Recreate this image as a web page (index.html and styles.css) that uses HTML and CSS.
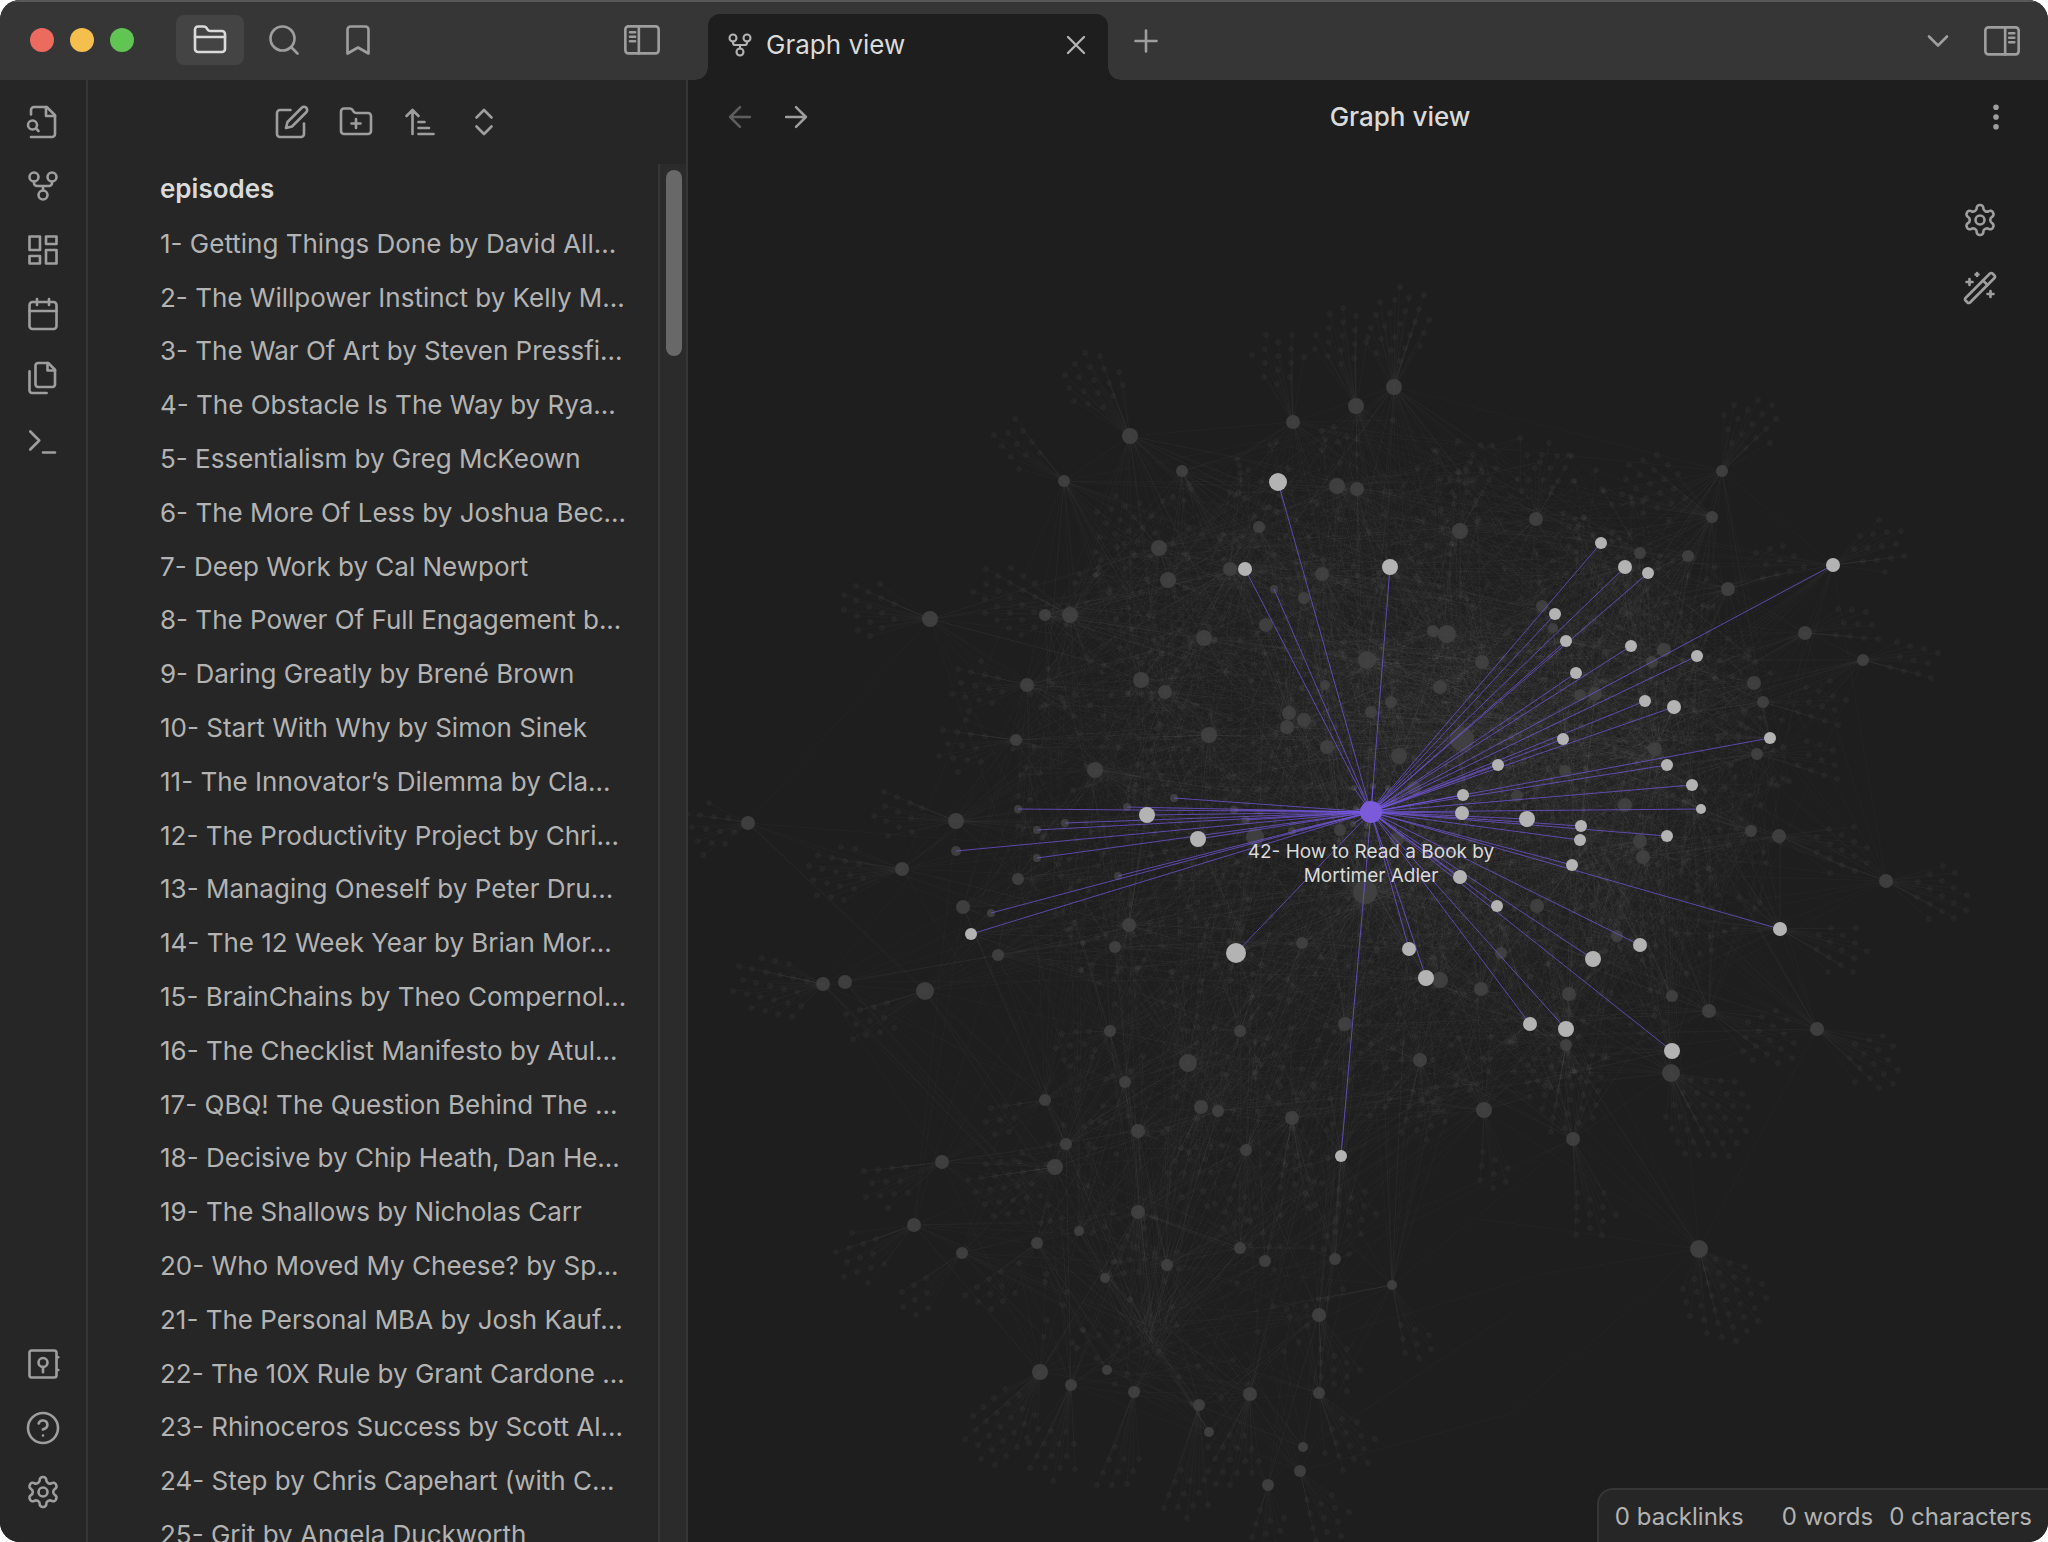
FILE: index.html
```html
<!DOCTYPE html>
<html lang="en">
<head>
<meta charset="utf-8">
<meta name="viewport" content="width=device-width, initial-scale=1">
<title>Graph view</title>
<link rel="stylesheet" href="styles.css">
</head>
<body>
<svg class="sprite" aria-hidden="true">
  <symbol id="i-folder" viewBox="0 0 24 24"><path d="M4 20h16a2 2 0 0 0 2-2V8a2 2 0 0 0-2-2h-7.93a2 2 0 0 1-1.66-.9l-.82-1.2A2 2 0 0 0 7.93 3H4a2 2 0 0 0-2 2v13c0 1.1.9 2 2 2Z"/><path d="M2 10h20"/></symbol>
  <symbol id="i-search" viewBox="0 0 24 24"><circle cx="11" cy="11" r="8"/><path d="m21 21-4.3-4.3"/></symbol>
  <symbol id="i-bookmark" viewBox="0 0 24 24"><path d="m19 21-7-4-7 4V5a2 2 0 0 1 2-2h10a2 2 0 0 1 2 2v16z"/></symbol>
  <symbol id="i-left" viewBox="0 0 24 24"><rect x="0.9" y="2.9" width="22.2" height="18" rx="2"/><path d="M9.9 3v18M4 6.8h3.4M4 9.8h3.4M4 12.8h3.4"/></symbol>
  <symbol id="i-right" viewBox="0 0 24 24"><rect x="0.9" y="2.9" width="22.2" height="18" rx="2"/><path d="M14.1 3v18M16.8 6.8h3.4M16.8 9.8h3.4M16.8 12.8h3.4"/></symbol>
  <symbol id="i-fork" viewBox="0 0 24 24"><circle cx="12" cy="18" r="3"/><circle cx="6" cy="6" r="3"/><circle cx="18" cy="6" r="3"/><path d="M18 9v1a2 2 0 0 1-2 2H8a2 2 0 0 1-2-2V9M12 12v3"/></symbol>
  <symbol id="i-close" viewBox="0 0 24 24"><path d="M18 6 6 18M6 6l12 12"/></symbol>
  <symbol id="i-plus" viewBox="0 0 24 24"><path d="M5 12h14M12 5v14"/></symbol>
  <symbol id="i-down" viewBox="0 0 24 24"><path d="m6 9 6 6 6-6"/></symbol>
  <symbol id="i-back" viewBox="0 0 24 24"><path d="m12 19-7-7 7-7M19 12H5"/></symbol>
  <symbol id="i-forward" viewBox="0 0 24 24"><path d="M5 12h14M12 5l7 7-7 7"/></symbol>
  <symbol id="i-more" viewBox="0 0 24 24"><circle cx="12" cy="12" r="1"/><circle cx="12" cy="5.5" r="1"/><circle cx="12" cy="18.5" r="1"/></symbol>
  <symbol id="i-file-search" viewBox="0 0 24 24"><path d="M4 22h14a2 2 0 0 0 2-2V7.5L14.5 2H6a2 2 0 0 0-2 2v3"/><path d="M14 2v6h6"/><circle cx="5" cy="14" r="3"/><path d="m9 18-1.5-1.5"/></symbol>
  <symbol id="i-dashboard" viewBox="0 0 24 24"><rect x="3" y="3" width="7" height="9"/><rect x="14" y="3" width="7" height="5"/><rect x="14" y="12" width="7" height="9"/><rect x="3" y="16" width="7" height="5"/></symbol>
  <symbol id="i-calendar" viewBox="0 0 24 24"><rect x="3" y="4" width="18" height="18" rx="2"/><path d="M16 2v4M8 2v4M3 10h18"/></symbol>
  <symbol id="i-files" viewBox="0 0 24 24"><path d="M15.5 2H8.6c-.4 0-.8.2-1.1.5-.3.3-.5.7-.5 1.1v12.8c0 .4.2.8.5 1.1.3.3.7.5 1.1.5h9.8c.4 0 .8-.2 1.1-.5.3-.3.5-.7.5-1.1V6.5L15.5 2z"/><path d="M3 7.6v12.8c0 .4.2.8.5 1.1.3.3.7.5 1.1.5h9.8"/><path d="M15 2v5h5"/></symbol>
  <symbol id="i-terminal" viewBox="0 0 24 24"><path d="m3.5 17 6-6-6-6M12 19h8"/></symbol>
  <symbol id="i-vault" viewBox="0 0 24 24"><rect x="3" y="3" width="18" height="18" rx="1.5"/><circle cx="12" cy="11" r="3"/><path d="M12 14v3.5M21.5 7.5h.7M21.5 16h.7"/></symbol>
  <symbol id="i-help" viewBox="0 0 24 24"><circle cx="12" cy="12" r="10"/><path d="M9.09 9a3 3 0 0 1 5.83 1c0 2-3 3-3 3M12 17h.01"/></symbol>
  <symbol id="i-gear" viewBox="0 0 24 24"><path d="M12.22 2h-.44a2 2 0 0 0-2 2v.18a2 2 0 0 1-1 1.73l-.43.25a2 2 0 0 1-2 0l-.15-.08a2 2 0 0 0-2.73.73l-.22.38a2 2 0 0 0 .73 2.73l.15.1a2 2 0 0 1 1 1.72v.51a2 2 0 0 1-1 1.74l-.15.09a2 2 0 0 0-.73 2.73l.22.38a2 2 0 0 0 2.73.73l.15-.08a2 2 0 0 1 2 0l.43.25a2 2 0 0 1 1 1.73V20a2 2 0 0 0 2 2h.44a2 2 0 0 0 2-2v-.18a2 2 0 0 1 1-1.73l.43-.25a2 2 0 0 1 2 0l.15.08a2 2 0 0 0 2.73-.73l.22-.39a2 2 0 0 0-.73-2.73l-.15-.08a2 2 0 0 1-1-1.74v-.5a2 2 0 0 1 1-1.74l.15-.09a2 2 0 0 0 .73-2.73l-.22-.38a2 2 0 0 0-2.73-.73l-.15.08a2 2 0 0 1-2 0l-.43-.25a2 2 0 0 1-1-1.73V4a2 2 0 0 0-2-2z"/><circle cx="12" cy="12" r="3"/></symbol>
  <symbol id="i-wand" viewBox="0 0 24 24"><path d="m21.64 3.64-1.28-1.28a1.21 1.21 0 0 0-1.72 0L2.36 18.64a1.21 1.21 0 0 0 0 1.72l1.28 1.28a1.2 1.2 0 0 0 1.72 0L21.64 5.36a1.2 1.2 0 0 0 0-1.72Z"/><path d="m14 7 3 3M5 6v4M19 14v4M10 2v2M7 8H3M21 16h-4M11 3H9"/></symbol>
  <symbol id="i-edit" viewBox="0 0 24 24"><path d="M11 4H4a2 2 0 0 0-2 2v14a2 2 0 0 0 2 2h14a2 2 0 0 0 2-2v-7"/><path d="M18.5 2.5a2.12 2.12 0 0 1 3 3L12 15l-4 1 1-4Z"/></symbol>
  <symbol id="i-folder-plus" viewBox="0 0 24 24"><path d="M4 20h16a2 2 0 0 0 2-2V8a2 2 0 0 0-2-2h-7.93a2 2 0 0 1-1.66-.9l-.82-1.2A2 2 0 0 0 7.93 3H4a2 2 0 0 0-2 2v13c0 1.1.9 2 2 2Z"/><path d="M12 10v6M9 13h6"/></symbol>
  <symbol id="i-sort" viewBox="0 0 24 24"><path d="m3 8 4-4 4 4M7 4v16M11 12h4M11 16h7M11 20h10"/></symbol>
  <symbol id="i-updown" viewBox="0 0 24 24"><path d="m7 15 5 5 5-5M7 9l5-5 5 5"/></symbol>
</svg>

<div class="app">
  <header class="titlebar">
    <div class="titlebar-left">
      <div class="lights"><span class="light light-close"></span><span class="light light-min"></span><span class="light light-max"></span></div>
      <div class="side-tabs">
        <button class="side-tab active" aria-label="Files"><svg class="icon"><use href="#i-folder"/></svg></button>
        <button class="side-tab" aria-label="Search"><svg class="icon"><use href="#i-search"/></svg></button>
        <button class="side-tab" aria-label="Bookmarks"><svg class="icon"><use href="#i-bookmark"/></svg></button>
      </div>
      <button class="icon-btn" aria-label="Collapse left sidebar"><svg class="icon"><use href="#i-left"/></svg></button>
    </div>
    <div class="titlebar-main">
      <div class="tab">
        <svg class="icon icon-tab"><use href="#i-fork"/></svg>
        <span class="tab-title">Graph view</span>
        <button class="tab-close" aria-label="Close tab"><svg class="icon icon-small"><use href="#i-close"/></svg></button>
      </div>
      <button class="icon-btn new-tab" aria-label="New tab"><svg class="icon"><use href="#i-plus"/></svg></button>
      <button class="icon-btn" aria-label="Tab list"><svg class="icon"><use href="#i-down"/></svg></button>
      <button class="icon-btn" aria-label="Expand right sidebar"><svg class="icon"><use href="#i-right"/></svg></button>
    </div>
  </header>

  <div class="workspace">
    <nav class="ribbon" aria-label="Ribbon">
      <button class="ribbon-btn" aria-label="Quick switcher"><svg class="icon"><use href="#i-file-search"/></svg></button>
      <button class="ribbon-btn" aria-label="Graph view"><svg class="icon"><use href="#i-fork"/></svg></button>
      <button class="ribbon-btn" aria-label="Canvas"><svg class="icon"><use href="#i-dashboard"/></svg></button>
      <button class="ribbon-btn" aria-label="Daily note"><svg class="icon"><use href="#i-calendar"/></svg></button>
      <button class="ribbon-btn" aria-label="Templates"><svg class="icon"><use href="#i-files"/></svg></button>
      <button class="ribbon-btn" aria-label="Command palette"><svg class="icon"><use href="#i-terminal"/></svg></button>
      <span class="spacer"></span>
      <button class="ribbon-btn" aria-label="Open another vault"><svg class="icon"><use href="#i-vault"/></svg></button>
      <button class="ribbon-btn" aria-label="Help"><svg class="icon"><use href="#i-help"/></svg></button>
      <button class="ribbon-btn" aria-label="Settings"><svg class="icon"><use href="#i-gear"/></svg></button>
    </nav>

    <aside class="sidebar">
      <div class="actions">
        <button class="action" aria-label="New note"><svg class="icon"><use href="#i-edit"/></svg></button>
        <button class="action" aria-label="New folder"><svg class="icon"><use href="#i-folder-plus"/></svg></button>
        <button class="action" aria-label="Sort order"><svg class="icon"><use href="#i-sort"/></svg></button>
        <button class="action" aria-label="Expand all"><svg class="icon"><use href="#i-updown"/></svg></button>
      </div>
      <div class="explorer">
        <div class="files">
          <h2 class="folder">episodes</h2>
          <ul class="file-list">
            <li><a class="file" href="#">1- Getting Things Done by David All...</a></li>
            <li><a class="file" href="#">2- The Willpower Instinct by Kelly M...</a></li>
            <li><a class="file" href="#">3- The War Of Art by Steven Pressfi...</a></li>
            <li><a class="file" href="#">4- The Obstacle Is The Way by Rya...</a></li>
            <li><a class="file" href="#">5- Essentialism by Greg McKeown</a></li>
            <li><a class="file" href="#">6- The More Of Less by Joshua Bec...</a></li>
            <li><a class="file" href="#">7- Deep Work by Cal Newport</a></li>
            <li><a class="file" href="#">8- The Power Of Full Engagement b...</a></li>
            <li><a class="file" href="#">9- Daring Greatly by Brené Brown</a></li>
            <li><a class="file" href="#">10- Start With Why by Simon Sinek</a></li>
            <li><a class="file" href="#">11- The Innovator’s Dilemma by Cla...</a></li>
            <li><a class="file" href="#">12- The Productivity Project by Chri...</a></li>
            <li><a class="file" href="#">13- Managing Oneself by Peter Dru...</a></li>
            <li><a class="file" href="#">14- The 12 Week Year by Brian Mor...</a></li>
            <li><a class="file" href="#">15- BrainChains by Theo Compernol...</a></li>
            <li><a class="file" href="#">16- The Checklist Manifesto by Atul...</a></li>
            <li><a class="file" href="#">17- QBQ! The Question Behind The ...</a></li>
            <li><a class="file" href="#">18- Decisive by Chip Heath, Dan He...</a></li>
            <li><a class="file" href="#">19- The Shallows by Nicholas Carr</a></li>
            <li><a class="file" href="#">20- Who Moved My Cheese? by Sp...</a></li>
            <li><a class="file" href="#">21- The Personal MBA by Josh Kauf...</a></li>
            <li><a class="file" href="#">22- The 10X Rule by Grant Cardone ...</a></li>
            <li><a class="file" href="#">23- Rhinoceros Success by Scott Al...</a></li>
            <li><a class="file" href="#">24- Step by Chris Capehart (with C...</a></li>
            <li><a class="file" href="#">25- Grit by Angela Duckworth</a></li>
          </ul>
        </div>
        <div class="scroll-track"><div class="scroll-thumb"></div></div>
      </div>
    </aside>

    <main class="pane">
      <div class="view-header">
        <button class="nav-btn muted" aria-label="Back"><svg class="icon icon-nav"><use href="#i-back"/></svg></button>
        <button class="nav-btn" aria-label="Forward"><svg class="icon icon-nav"><use href="#i-forward"/></svg></button>
        <h1 class="view-title">Graph view</h1>
        <button class="nav-btn" aria-label="More options"><svg class="icon icon-more"><use href="#i-more"/></svg></button>
      </div>
      <div class="graph">
        <svg class="graph-canvas" id="graph" viewBox="688 154 1360 1388" preserveAspectRatio="xMidYMid meet" role="img" aria-label="Note graph">
          <g id="links"></g><g id="leaves"></g><g id="nodes"></g><g id="active"></g>
          <text class="node-label" text-anchor="middle"><tspan x="1371" y="858">42- How to Read a Book by</tspan><tspan x="1371" y="882">Mortimer Adler</tspan></text>
        </svg>
        <div class="graph-controls">
          <button class="control" aria-label="Graph settings"><svg class="icon"><use href="#i-gear"/></svg></button>
          <button class="control" aria-label="Animate"><svg class="icon"><use href="#i-wand"/></svg></button>
        </div>
      </div>
      <footer class="status">
        <span class="status-item backlinks">0 backlinks</span>
        <span class="status-item">0 words</span>
        <span class="status-item">0 characters</span>
      </footer>
    </main>
  </div>
</div>
<script src="graph.js"></script>
</body>
</html>
```
FILE: styles.css
```css
:root {
  --bg: #1e1e1e;
  --bg-side: #262626;
  --bg-title: #363636;
  --line: #363636;
  --text: #dadada;
  --text-muted: #b3b3b3;
  --icon: #9e9e9e;
}

* { box-sizing: border-box; }

body {
  margin: 0;
  background: #fff;
  color: var(--text-muted);
  font-family: Inter, "Liberation Sans", sans-serif;
  font-size: 26px;
  line-height: 1.3;
}

button {
  display: flex;
  align-items: center;
  justify-content: center;
  padding: 0;
  border: 0;
  background: none;
  color: var(--icon);
  font: inherit;
}

.sprite { display: none; }

.icon {
  width: 36px;
  height: 36px;
  fill: none;
  stroke: currentColor;
  stroke-width: 1.75;
  stroke-linecap: round;
  stroke-linejoin: round;
}
.icon-small { width: 32px; height: 32px; }
.icon-nav { width: 34px; height: 34px; }
.icon-tab { width: 28px; height: 28px; }
.icon-more { fill: currentColor; }

.app {
  display: flex;
  flex-direction: column;
  height: 100vh;
  overflow: hidden;
  border-radius: 20px;
  background: var(--bg);
}

/* Title bar */
.titlebar {
  display: flex;
  flex: none;
  height: 80px;
  background: var(--bg-title);
  box-shadow: inset 0 2px #585858;
}
.titlebar-left {
  display: flex;
  align-items: center;
  flex: none;
  width: 688px;
  padding: 0 20px 0 30px;
}
.lights { display: flex; gap: 16px; }
.light { width: 24px; height: 24px; border-radius: 50%; }
.light-close { background: #ec6a5e; }
.light-min { background: #f4bf4f; }
.light-max { background: #61c554; }
.side-tabs { display: flex; flex: 1; gap: 6px; margin-left: 42px; }
.side-tab { width: 68px; height: 50px; border-radius: 8px; }
.side-tab.active { background: #444; color: var(--text); }
.icon-btn { width: 52px; height: 52px; }

.titlebar-main {
  display: flex;
  align-items: center;
  flex: 1;
  gap: 12px;
  padding: 2px 20px 0;
}
.tab {
  position: relative;
  display: flex;
  align-items: center;
  align-self: flex-end;
  gap: 12px;
  width: 400px;
  height: 66px;
  padding: 0 16px 4px 18px;
  border-radius: 12px 12px 0 0;
  background: var(--bg);
  color: var(--text-muted);
}
.tab::before,
.tab::after {
  content: "";
  position: absolute;
  bottom: 0;
  width: 12px;
  height: 12px;
}
.tab::before { right: 100%; background: radial-gradient(circle at 0 0, transparent 11px, var(--bg) 12px); }
.tab::after { left: 100%; background: radial-gradient(circle at 100% 0, transparent 11px, var(--bg) 12px); }
.tab-title { flex: 1; color: var(--text); }
.tab-close { color: var(--text-muted); }
.new-tab { margin-right: auto; }

/* Ribbon */
.workspace { display: flex; flex: 1; min-height: 0; }
.ribbon {
  display: flex;
  flex: none;
  flex-direction: column;
  width: 88px;
  padding: 10px 0 18px;
  border-right: 2px solid var(--line);
  background: var(--bg-side);
}
.ribbon-btn { height: 64px; }
.spacer { flex: 1; }

/* File explorer */
.sidebar {
  display: flex;
  flex: none;
  flex-direction: column;
  width: 600px;
  border-right: 2px solid var(--line);
  background: var(--bg-side);
}
.actions { display: flex; flex: none; justify-content: center; height: 84px; padding-left: 2px; }
.action { width: 64px; }
.explorer { display: flex; flex: 1; min-height: 0; }
.files { flex: 1; min-width: 0; overflow: hidden; padding-left: 72px; }
.folder {
  margin: 0;
  padding: 8px 0 12px;
  color: var(--text);
  font-size: 26px;
  font-weight: 600;
}
.file-list { margin: 0; padding: 0; list-style: none; }
.file {
  display: block;
  padding: 9px 0 11px;
  color: inherit;
  text-decoration: none;
  white-space: nowrap;
}
.scroll-track {
  flex: none;
  width: 28px;
  padding: 6px 4px 0 6px;
  border-left: 2px solid var(--line);
  background: #2b2b2b;
}
.scroll-thumb { height: 186px; border-radius: 8px; background: #686868; }

/* Graph pane */
.pane {
  position: relative;
  display: flex;
  flex: 1;
  flex-direction: column;
  min-width: 0;
}
.view-header {
  display: flex;
  align-items: center;
  flex: none;
  height: 74px;
  padding: 0 24px;
}
.nav-btn { width: 56px; height: 56px; }
.muted { opacity: 0.5; }
.view-title {
  flex: 1;
  margin: 0;
  padding-left: 8px;
  color: var(--text);
  font-size: 26px;
  font-weight: 500;
  text-align: center;
}
.graph { position: relative; flex: 1; min-height: 0; }
.graph-canvas { display: block; width: 100%; height: 100%; }
.graph-controls {
  position: absolute;
  top: 32px;
  right: 34px;
}
.control { width: 68px; height: 68px; }
.node-label { fill: var(--text); font-size: 19px; }

.status {
  position: absolute;
  right: 0;
  bottom: 0;
  display: flex;
  gap: 16px;
  padding: 11px 16px 10px;
  border: solid var(--line);
  border-width: 2px 0 0 2px;
  border-radius: 16px 0 0 0;
  background: var(--bg-side);
  font-size: 24px;
}
.backlinks { margin-right: 22px; }

/* Graph shapes */
.faint-link { fill: none; stroke: #b3b3b3; stroke-opacity: 0.035; }
.leaf { fill: #b3b3b3; fill-opacity: 0.05; }
.node { fill: #414141; fill-opacity: 0.9; }
.node-linked { fill: #b3b3b3; }
.node-active { fill: #7c5bdb; }
.link-active { stroke: #7859e6; stroke-opacity: 0.7; }
```
FILE: graph.js
```js
// Graph data: each node is x, y, radius.
const ACTIVE = [1371, 812, 11];

const LINKED = [
  [1278,482,9],[1245,569,7],[1147,815,8],[1198,839,8],[971,934,6],[1236,953,10],[1341,1156,6],
  [1390,567,8],[1601,543,6],[1625,567,7],[1648,573,6],[1555,614,6],[1566,641,6],[1631,646,6],
  [1697,656,6],[1576,673,6],[1645,701,6],[1674,707,7],[1563,739,6],[1770,738,6],[1498,765,6],
  [1667,765,6],[1692,785,6],[1463,795,6],[1701,809,5],[1462,813,7],[1527,819,8],[1581,826,6],
  [1580,840,6],[1667,836,6],[1572,865,6],[1460,877,7],[1833,565,7],[1497,906,6],[1409,949,7],
  [1426,978,8],[1530,1024,7],[1566,1029,8],[1593,959,8],[1640,945,7],[1672,1051,8],[1780,929,7]
];

const LINKED_SMALL = [
  [1018,809,4],[1065,823,4],[1037,830,4],[956,851,5],[1037,858,4],[1127,807,4],[1174,798,4],
  [1118,876,4],[1234,810,4],[1246,820,4],[1274,589,4],[1292,831,4],[991,913,4],[1354,788,3],
  [1373,786,3],[1388,788,3],[1353,824,3],[1367,826,3],[1394,800,3],[1356,809,3]
];

const NODES = [
  [1293,422,7],[1356,406,8],[1130,436,8],[1064,481,6],[1182,471,6],[1337,486,8],[1357,489,7],
  [1259,527,6],[1159,548,8],[1168,580,8],[1230,569,7],[1322,574,7],[1304,598,6],[930,619,8],
  [1045,615,6],[1070,615,8],[1204,638,8],[1266,625,7],[1367,660,9],[1027,685,7],[1141,680,8],
  [1165,692,7],[1325,685,5],[1289,713,7],[1304,720,7],[1287,727,7],[1371,712,6],[1016,740,6],
  [1209,735,8],[1327,747,7],[1095,770,8],[748,823,7],[956,821,8],[1255,837,9],[1340,830,6],
  [902,869,7],[1018,879,6],[963,907,7],[1129,925,7],[1115,947,6],[998,955,6],[823,984,7],
  [845,982,7],[925,991,9],[1302,943,6],[1110,1031,6],[1240,1031,6],[1345,1024,7],[1188,1063,9],
  [1125,1082,6],[1045,1100,6],[1201,1107,7],[1218,1111,6],[1292,1118,7],[1138,1131,7],
  [1066,1144,6],[1055,1167,8],[942,1162,7],[1246,1150,6],[914,1225,7],[1138,1212,7],[1079,1231,5],
  [1037,1243,6],[962,1253,6],[1240,1248,6],[1265,1261,6],[1335,1259,6],[1167,1265,6],[1105,1278,5],
  [1319,1315,7],[1040,1372,8],[1071,1385,6],[1107,1370,5],[1134,1392,6],[1250,1394,7],[1319,1393,6],
  [1199,1405,6],[1209,1432,5],[1303,1447,5],[1300,1471,6],[1268,1485,6],[1394,387,8],[1460,531,8],
  [1536,519,7],[1722,471,6],[1712,517,6],[1640,553,6],[1688,556,6],[1728,589,7],[1542,606,6],
  [1553,628,5],[1433,631,6],[1447,634,9],[1482,662,7],[1664,650,7],[1652,662,6],[1805,633,7],
  [1863,660,6],[1754,683,7],[1763,702,6],[1440,687,7],[1391,702,6],[1580,695,6],[1595,694,7],
  [1462,739,12],[1399,756,8],[1655,749,7],[1757,754,6],[1565,771,6],[1414,788,7],[1517,796,6],
  [1625,805,7],[1751,831,6],[1779,836,7],[1640,841,7],[1643,857,7],[1886,881,7],[1397,839,7],
  [1365,892,12],[1537,906,7],[1617,936,6],[1501,953,6],[1440,980,8],[1481,989,7],[1569,994,7],
  [1672,996,6],[1709,1011,7],[1817,1029,7],[1566,1045,6],[1671,1073,9],[1420,1060,7],[1484,1110,8],
  [1573,1139,7],[1699,1249,9],[1392,1285,5]
];

// Fans of unresolved notes: hub x, hub y, fan centre x, fan centre y, count.
const FANS = [
  [1394,387,1400,324,24],[1356,406,1342,336,16],[1293,422,1278,356,14],[1130,436,1094,380,18],
  [1064,481,1017,444,11],[930,619,869,607,16],[748,823,706,829,14],[823,984,770,986,24],
  [902,869,836,872,18],[925,991,870,1021,11],[942,1162,886,1182,12],[914,1225,860,1258,13],
  [962,1253,915,1300,8],[1037,1243,990,1294,10],[1040,1372,1000,1427,26],[1071,1385,1052,1456,14],
  [1134,1392,1118,1472,10],[1199,1405,1184,1494,12],[1250,1394,1230,1460,16],[1268,1485,1266,1534,9],
  [1300,1471,1324,1518,12],[1319,1393,1350,1446,14],[1319,1315,1334,1370,12],[1392,1285,1417,1344,8],
  [1699,1249,1726,1300,34],[1573,1139,1590,1214,12],[1484,1110,1494,1174,8],[1420,1060,1420,1116,12],
  [1671,1073,1710,1118,36],[1817,1029,1874,1064,16],[1780,929,1842,950,14],[1886,881,1942,896,16],
  [1779,836,1842,850,15],[1863,660,1914,660,11],[1805,633,1858,624,10],[1833,565,1882,546,14],
  [1722,471,1752,424,16],[1712,517,1650,484,20],[1536,519,1550,468,13],[1460,531,1474,480,11],
  [1757,754,1822,760,10],[1763,702,1822,706,12],[1027,685,975,686,14],[1016,740,962,746,13],
  [956,821,898,812,12],[1070,615,1010,598,24],[1055,1167,1004,1188,22],[1110,1031,1070,1046,9],
  [1045,1100,1000,1120,8],[1709,1011,1770,1040,17],[1292,1118,1296,1170,11],[1246,1150,1240,1210,8],
  [1341,1156,1350,1212,12],[1201,1107,1190,1160,10],[1138,1212,1130,1260,8],[1566,1045,1570,1100,24],
  [1728,589,1780,560,10],[1209,735,1160,750,14],[1159,548,1120,520,14]
];

// Crowded spots where many links meet.
const MEETING = [
  [1530,722],[1365,892],[1462,739],[1160,1335],[1371,811],[1140,1325],[1655,749],[1367,660],
  [1150,1345],[1365,892],[1520,728],[1440,860]
];

let seed = 42;
function random() {
  seed = (seed * 1664525 + 1013904223) % 4294967296;
  return seed / 4294967296;
}
const pick = list => list[Math.floor(random() * list.length)];

const NS = "http://www.w3.org/2000/svg";
function add(parent, tag, attrs) {
  const el = document.createElementNS(NS, tag);
  for (const key in attrs) el.setAttribute(key, attrs[key]);
  document.getElementById(parent).appendChild(el);
}
function dot(parent, cls, [x, y, r]) {
  add(parent, "circle", { class: cls, cx: x, cy: y, r });
}
function faint(a, b) {
  add("links", "path", { class: "faint-link", d: `M${a[0]} ${a[1]}L${b[0]} ${b[1]}` });
}

const hubs = NODES.concat(LINKED);
const near = (p, reach) => hubs.filter(h => Math.hypot(h[0] - p[0], h[1] - p[1]) < reach);

// Fans: leaves on a loose hexagonal grid turned toward their hub.
for (const [hx, hy, cx, cy, count] of FANS) {
  const turn = Math.atan2(cy - hy, cx - hx) + 0.25;
  const spots = [];
  for (let i = -5; i <= 5; i++) {
    for (let j = -5; j <= 5; j++) spots.push([(i + (j % 2) / 2) * 14, j * 13]);
  }
  spots.sort((a, b) => Math.hypot(...a) - Math.hypot(...b));
  for (const [u, v] of spots.slice(0, count)) {
    const p = [
      Math.round(cx + u * Math.cos(turn) - v * Math.sin(turn)),
      Math.round(cy + u * Math.sin(turn) + v * Math.cos(turn))
    ];
    faint([hx, hy], p);
    dot("leaves", "leaf", [p[0], p[1], 3]);
  }
}

// Shared leaves in the body of the graph, each tied to a few hubs.
for (let i = 0; i < 1150; i++) {
  const angle = random() * Math.PI * 2;
  const reach = Math.sqrt(random());
  const low = i % 8 === 0;
  const p = low
    ? [Math.round(1180 + Math.cos(angle) * reach * 180), Math.round(1210 + Math.sin(angle) * reach * 200)]
    : [Math.round(1400 + Math.cos(angle) * reach * 390), Math.round(770 + Math.sin(angle) * reach * 350)];
  dot("leaves", "leaf", [p[0], p[1], 3]);
  const close = near(p, 190);
  if (close.length) {
    faint(p, pick(close));
    faint(p, pick(close));
  }
  if (!low) {
    faint(p, pick(near(p, 420)));
    faint(p, pick(near(p, 420)));
  }
}

// Longer links between hubs and the crowded spots.
for (const hub of hubs) {
  const reach = hub[1] > 1120 ? 260 : 440;
  for (let i = 0; i < 4; i++) faint(hub, pick(near(hub, reach)));
  for (const spot of MEETING) {
    const length = Math.hypot(hub[0] - spot[0], hub[1] - spot[1]);
    if (length < 520 && random() < 0.75) {
      faint(hub, [spot[0] + Math.round(random() * 24 - 12), spot[1] + Math.round(random() * 24 - 12)]);
    }
  }
}
faint([1699,1249],[1509,1414]);
faint([1509,1414],[1300,1471]);
faint([1699,1249],[1543,1274]);
faint([1699,1249],[1472,1218]);
faint([1543,1274],[1319,1340]);
faint([1515,1311],[1319,1440]);

NODES.forEach(n => dot("nodes", "node", n));
LINKED_SMALL.forEach(n => dot("nodes", "node", n));
for (const n of LINKED.concat(LINKED_SMALL)) {
  add("active", "line", { class: "link-active", x1: ACTIVE[0], y1: ACTIVE[1], x2: n[0], y2: n[1] });
}
LINKED.forEach(n => dot("active", "node-linked", n));
dot("active", "node-active", ACTIVE);
```
